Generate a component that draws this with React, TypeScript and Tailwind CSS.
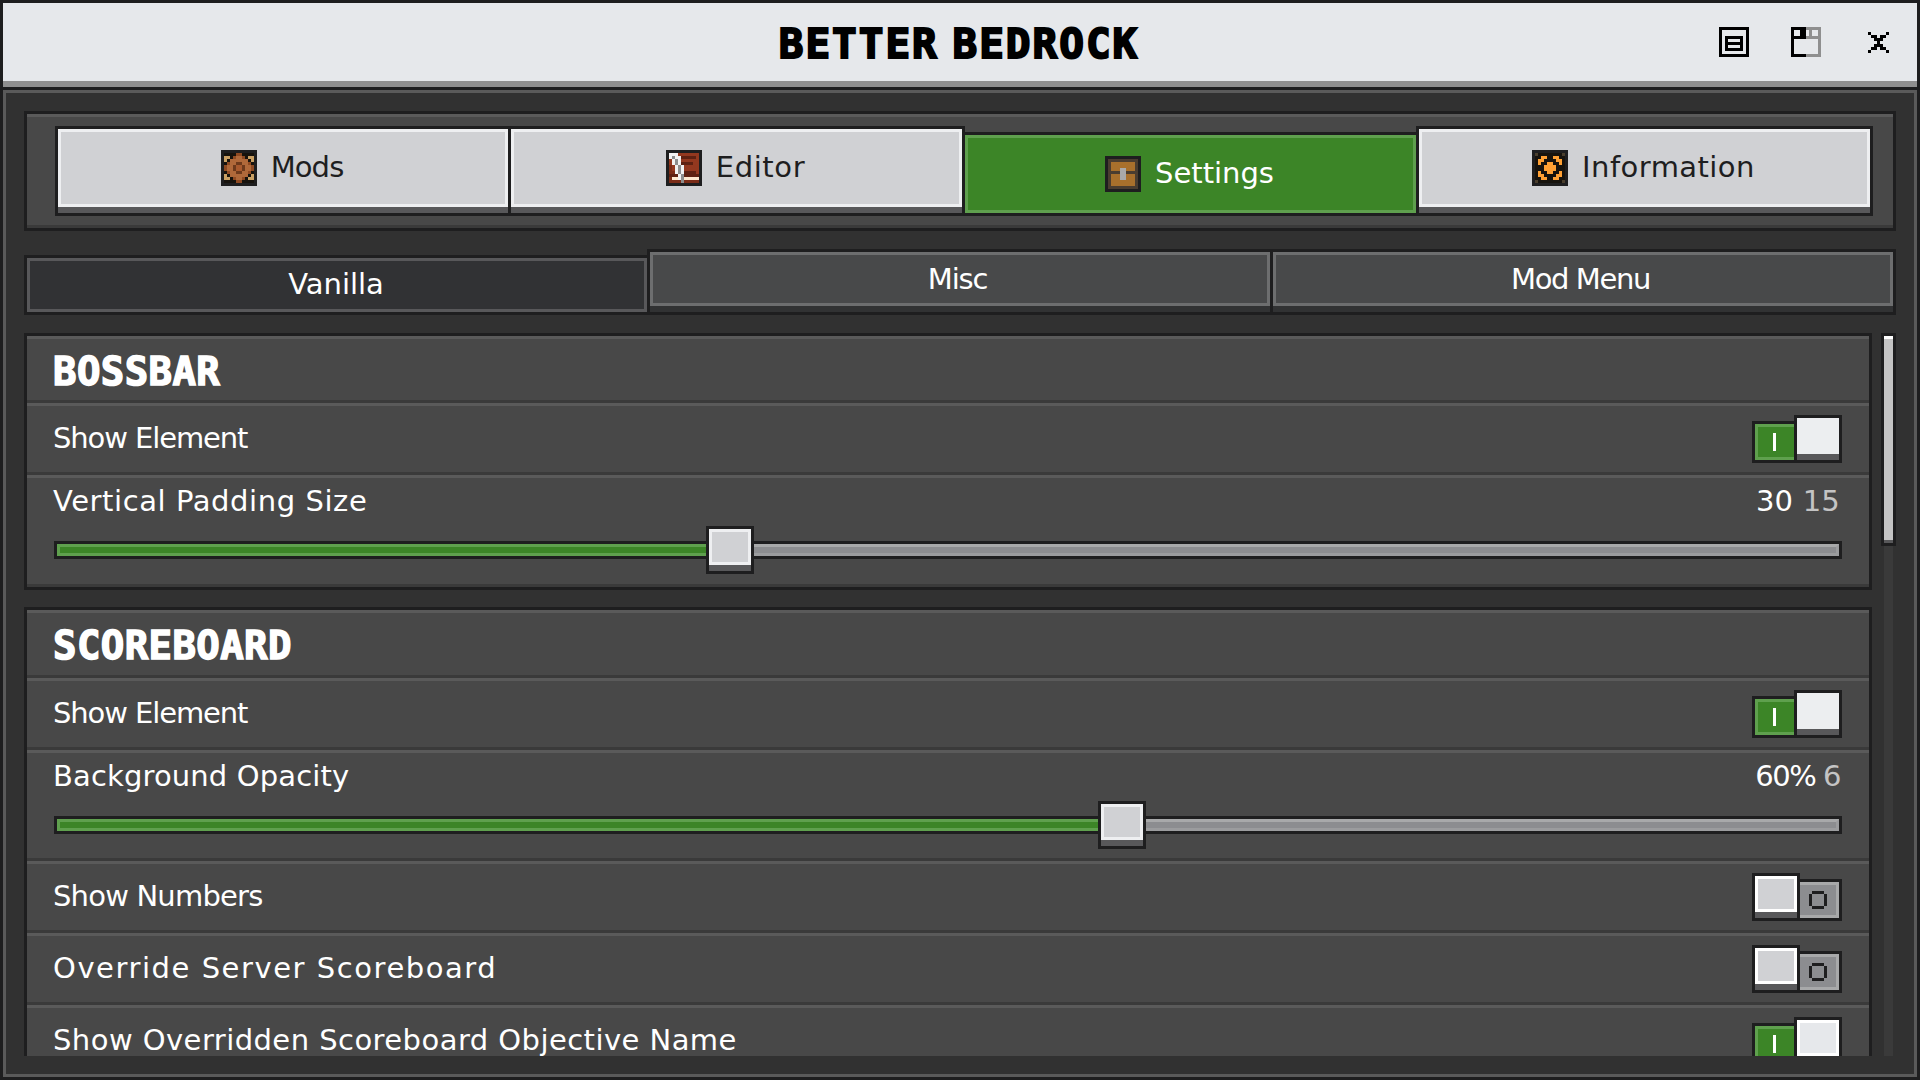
const px: Record<string, string> = {
  K: "#1e1e1f",
  k: "#17130d",
  T: "#c9a063",
  R: "#8f4a22",
  O: "#b0693a",
  D: "#6e3a1c",
  C: "#a85a2e",
  W: "#f2f2f2",
  G: "#8d8d8d",
  r: "#93381f",
  L: "#5e2112",
  m: "#7a2c18",
  c: "#fde8cf",
  B: "#4a3d30",
  o: "#a8702c",
  S: "#a9a9a9",
  n: "#4a3e2c",
  A: "#ffa033",
  X: "#000000",
  g: "#8f8f8f",
};

const modsIcon = [
  "KKKKKKKKKKKK",
  "KkkkkRRkkkkK",
  "KTTkROORkTTK",
  "KTkOOOOOOkTK",
  "KkROODDOORkK",
  "KROODCCDOORK",
  "KROODCCDOORK",
  "KkROODDOORkK",
  "KTkOOOOOOkTK",
  "KTTkROORkTTK",
  "KkkkkRRkkkkK",
  "KKKKKKKKKKKK",
];

const editorIcon = [
  "KKKKKKKKKKKK",
  "KWWWrrrrrrrK",
  "KWGWWLLLLLrK",
  "KrWGWrrrrrrK",
  "KrWGWLLLLrrK",
  "KmrWGWrrrrrK",
  "KmrWGWrrrrrK",
  "KmmWGWLLLLrK",
  "KLLLWGLLLLLK",
  "KmccWGcccccK",
  "KmmmmGmmmmmK",
  "KKKKKKKKKKKK",
];

const settingsIcon = [
  "KKKKKKKKKKKK",
  "KBBBBBBBBBBK",
  "KBooooooooBK",
  "KBooooooooBK",
  "KBoooSSoooBK",
  "KBBBBSSBBBBK",
  "KBoooSSoooBK",
  "KBoooSSoooBK",
  "KBooooooooBK",
  "KBooooooooBK",
  "KBBBBBBBBBBK",
  "KKKKKKKKKKKK",
];

const infoIcon = [
  "KKKKKKKKKKKK",
  "KnkkkkkkkknK",
  "KkkAAkkAAkkK",
  "KkAAkkkkAAkK",
  "KkAkkAAkkAkK",
  "KkkkAAAAkkkK",
  "KkkkAAAAkkkK",
  "KkAkkAAkkAkK",
  "KkAAkkkkAAkK",
  "KkkAAkkAAkkK",
  "KnkkkkkkkknK",
  "KKKKKKKKKKKK",
];

const stackIcon = [
  "XXXXXXXXXX",
  "X........X",
  "X........X",
  "X.XXXXXX.X",
  "X.X....X.X",
  "X.XXXXXX.X",
  "X.X....X.X",
  "X.XXXXXX.X",
  "X........X",
  "XXXXXXXXXX",
];

const windowIcon = [
  "XXXXXggggg",
  "X..XX.g..g",
  "X..XX.g..g",
  "XXXXXggggg",
  "X........g",
  "X........g",
  "X........g",
  "X........g",
  "X........g",
  "XXXXXggggg",
];

const closeIcon = [
  "X.....X",
  ".XX.XX.",
  "..XXX..",
  "...X...",
  "..XXX..",
  ".XX.XX.",
  "X.....X",
];

function PixelIcon({ rows }: { rows: string[] }) {
  const w = rows[0].length;
  return (
    <svg width={w * 3} height={rows.length * 3} viewBox={`0 0 ${w} ${rows.length}`} shapeRendering="crispEdges" className="shrink-0">
      {rows.map((row, y) =>
        row.split("").map((c, x) => (c === "." ? null : <rect key={`${x}-${y}`} x={x} y={y} width="1" height="1" fill={px[c]} />)),
      )}
    </svg>
  );
}

function TopTab({ label, icon, className, track }: { label: string; icon: string[]; className: string; track: string }) {
  return (
    <div className={`h-[90px] flex flex-col border-y-[3px] border-[#1e1e1f] ${className}`}>
      <div className="flex-1 flex items-center justify-center gap-[14px] pr-[2px] bg-[#d0d1d4] border-[3px] border-[#eeeff1] text-[#1e1e1f]">
        <PixelIcon rows={icon} />
        <span className={`mt-[-2px] ${track}`}>{label}</span>
      </div>
      <div className="h-[6px] bg-[#58585a]" />
    </div>
  );
}

function SubTab({ label, className, track }: { label: string; className: string; track: string }) {
  return (
    <div className={`h-[66px] flex flex-col border-y-[3px] border-[#1e1e1f] ${className}`}>
      <div className={`flex-1 flex items-center justify-center pr-[5px] bg-[#48494a] border-[3px] border-[#6d6e6f] text-white ${track}`}>{label}</div>
      <div className="h-[6px] bg-[#313233]" />
    </div>
  );
}

function Row({ className, children }: { className: string; children: React.ReactNode }) {
  return <div className={`border-t-[3px] border-b-[3px] border-t-[#5a5a5a] border-b-[#3a3a3a] pl-[27px] pr-[27px] ${className}`}>{children}</div>;
}

function ToggleOn({ flat }: { flat?: boolean }) {
  return (
    <div className="flex items-end h-[48px] w-[90px]">
      <div className="w-[42px] h-[42px] border-y-[3px] border-l-[3px] border-[#1e1e1f]">
        <div className="h-full flex items-center justify-center bg-[#3c8527] border-[3px] border-r-0 border-[#5fa04e]">
          <div className="w-[3px] h-[18px] bg-white mr-[3px]" />
        </div>
      </div>
      <div className="w-[48px] h-[48px] flex flex-col border-[3px] border-[#1e1e1f]">
        <div className={`flex-1 bg-[#e6e8eb] border-[3px] ${flat ? "border-[#eceef0] bg-[#eceef0]" : "border-white"}`} />
        <div className="h-[6px] bg-[#58585a]" />
      </div>
    </div>
  );
}

function ToggleOff() {
  return (
    <div className="flex items-end h-[48px] w-[90px]">
      <div className="w-[48px] h-[48px] flex flex-col border-[3px] border-[#1e1e1f]">
        <div className="flex-1 bg-[#d0d1d4] border-[3px] border-white" />
        <div className="h-[6px] bg-[#58585a]" />
      </div>
      <div className="w-[42px] h-[42px] border-y-[3px] border-r-[3px] border-[#1e1e1f]">
        <div className="h-full flex items-center justify-center bg-[#8c8d90] border-[3px] border-l-0 border-[#a8a9aa]">
          <svg width="18" height="18" viewBox="0 0 6 6" shapeRendering="crispEdges" fill="#1e1e1f" className="ml-[-1px]">
            <path d="M1 0h4v1H1zM1 5h4v1H1zM0 1h1v4H0zM5 1h1v4H5z" />
          </svg>
        </div>
      </div>
    </div>
  );
}

function ToggleRow({ label, on, flat, track }: { label: string; on: boolean; flat?: boolean; track: string }) {
  return (
    <Row className="h-[72px] flex items-center justify-between">
      <span className={`ml-[-1px] mt-[-1px] ${track}`}>{label}</span>
      {on ? <ToggleOn flat={flat} /> : <ToggleOff />}
    </Row>
  );
}

function SliderRow({ label, value, step, fill, height, track, valueTrack }: { label: string; value: string; step: string; fill: string; height: string; track: string; valueTrack: string }) {
  return (
    <Row className={height}>
      <div className="h-[45px] flex items-center justify-between pt-[2px]">
        <span className={`ml-[-1px] ${track}`}>{label}</span>
        <span className={`mr-[2px] ${valueTrack}`}>
          {value} <span className="text-[#c4c4c4]">{step}</span>
        </span>
      </div>
      <div className="mt-[3px] flex items-center h-[48px]">
        <div className={`h-[18px] border-y-[3px] border-l-[3px] border-[#1e1e1f] ${fill}`}>
          <div className="h-full bg-[#3c8527] border-y-[3px] border-l-[3px] border-[#5fa04e]" />
        </div>
        <div className="w-[48px] h-[48px] flex flex-col border-[3px] border-[#1e1e1f]">
          <div className="flex-1 bg-[#d0d1d4] border-[3px] border-[#eeeff1]" />
          <div className="h-[6px] bg-[#58585a]" />
        </div>
        <div className="flex-1 h-[18px] border-y-[3px] border-r-[3px] border-[#1e1e1f]">
          <div className="h-full bg-[#8c8d90] border-y-[3px] border-r-[3px] border-t-[#a8a9aa] border-b-[#9b9c9e] border-r-[#9b9c9e]" />
        </div>
      </div>
    </Row>
  );
}

function SectionTitle({ title, height }: { title: string; height: string }) {
  return (
    <Row className={`flex items-center ${height}`}>
      <span className="font-['DejaVu_Sans_Mono',monospace] font-bold text-[39px] leading-none tracking-[0.4px] text-white ml-[-1px] mt-[3px] [-webkit-text-stroke:1.5px_white]">{title}</span>
    </Row>
  );
}

export default function App() {
  return (
    <div className="w-[1920px] h-[1080px] p-[3px] flex flex-col bg-[#1e1e1f] font-['DejaVu_Sans',sans-serif] text-[29px] leading-none text-white overflow-hidden">
      <header className="h-[84px] shrink-0 flex items-center justify-between bg-[#e6e8eb] border-b-[6px] border-[#8f8f8f]">
        <div className="w-[198px]" />
        <h1 className="font-['DejaVu_Sans_Mono',monospace] font-bold text-[41px] leading-none tracking-[2px] [word-spacing:-13px] text-black [-webkit-text-stroke:2px_black] mt-[4px] pr-[2px]">BETTER BEDROCK</h1>
        <div className="w-[198px] flex items-center pr-[28px] justify-end">
          <PixelIcon rows={stackIcon} />
          <div className="ml-[42px]">
            <PixelIcon rows={windowIcon} />
          </div>
          <div className="ml-[47px]">
            <PixelIcon rows={closeIcon} />
          </div>
        </div>
      </header>

      <main className="mt-[3px] flex-1 min-h-0 flex flex-col bg-[#313131] border-[3px] border-[#5a5a5a] px-[18px] py-[18px]">
        <div className="h-[120px] shrink-0 border-[3px] border-[#1e1e1f]">
          <div className="h-full bg-[#484848] border-t-[3px] border-b-[3px] border-t-[#5a5a5a] border-b-[#3a3a3a] pl-[28px] py-[9px] flex">
            <TopTab label="Mods" icon={modsIcon} className="w-[456px] border-x-[3px]" track="tracking-[-0.9px]" />
            <TopTab label="Editor" icon={editorIcon} className="w-[454px] border-r-[3px]" track="tracking-[0.6px]" />
            <div className="w-[451px] h-[90px] pt-[6px]">
              <div className="h-full border-y-[3px] border-[#1e1e1f]">
                <div className="h-full flex items-center justify-center gap-[14px] pr-[2px] bg-[#3c8527] border-[3px] border-[#5fa04e] text-white">
                  <PixelIcon rows={settingsIcon} />
                  <span className="mt-[-2px]">Settings</span>
                </div>
              </div>
            </div>
            <TopTab label="Information" icon={infoIcon} className="w-[457px] border-x-[3px]" track="tracking-[0.45px]" />
          </div>
        </div>

        <div className="mt-[18px] h-[66px] shrink-0 flex items-end">
          <div className="w-[623px] h-[60px] border-y-[3px] border-l-[3px] border-[#1e1e1f]">
            <div className="h-full flex items-center justify-center bg-[#313234] border-[3px] border-[#58585a] text-white pb-[2px] pr-[2px]">Vanilla</div>
          </div>
          <SubTab label="Misc" className="w-[626px] border-x-[3px]" track="tracking-[-1.2px]" />
          <SubTab label="Mod Menu" className="w-[623px] border-r-[3px]" track="tracking-[-1.4px]" />
        </div>

        <div className="mt-[18px] flex-1 min-h-0 flex overflow-hidden">
          <div className="w-[1848px] shrink-0 flex flex-col gap-[17px]">
            <section className="shrink-0 border-[3px] border-[#1e1e1f] bg-[#484848]">
              <SectionTitle title="BOSSBAR" height="h-[67px]" />
              <ToggleRow label="Show Element" on flat track="tracking-[-1.1px]" />
              <SliderRow label="Vertical Padding Size" value="30" step="15" fill="w-[652px]" height="h-[112px]" track="tracking-[0.58px]" valueTrack="tracking-[0.2px]" />
            </section>
            <section className="shrink-0 border-[3px] border-[#1e1e1f] bg-[#484848]">
              <SectionTitle title="SCOREBOARD" height="h-[68px]" />
              <ToggleRow label="Show Element" on flat track="tracking-[-1.1px]" />
              <SliderRow label="Background Opacity" value="60%" step="6" fill="w-[1044px]" height="h-[111px]" track="tracking-[0.14px]" valueTrack="tracking-[-1.5px]" />
              <ToggleRow label="Show Numbers" on={false} track="tracking-[-0.8px]" />
              <ToggleRow label="Override Server Scoreboard" on={false} track="tracking-[1.55px]" />
              <ToggleRow label="Show Overridden Scoreboard Objective Name" on track="tracking-[0.45px]" />
            </section>
          </div>
          <div className="ml-[9px] w-[15px] shrink-0 flex flex-col">
            <div className="h-[213px] shrink-0 flex flex-col border-[3px] border-[#1e1e1f]">
              <div className="flex-1 bg-[#c4c4c4] border-t-[3px] border-white" />
              <div className="h-[3px] bg-[#58585a]" />
            </div>
            <div className="flex-1 mx-[3px] bg-[#3a3a3a]" />
          </div>
        </div>
      </main>
    </div>
  );
}
